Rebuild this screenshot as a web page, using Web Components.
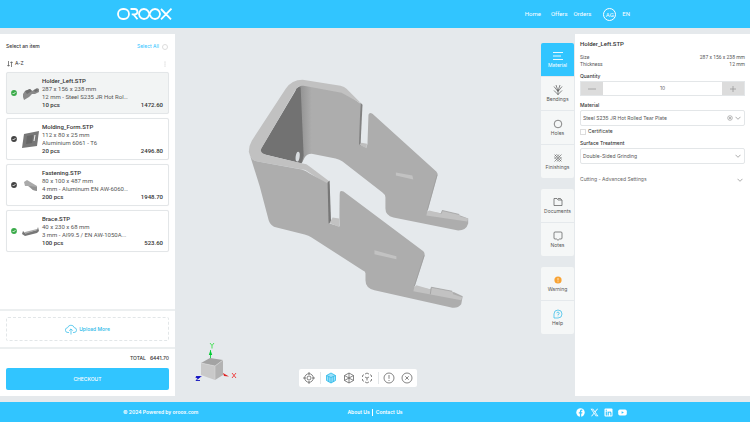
<!DOCTYPE html>
<html lang="en">
<head>
<meta charset="utf-8">
<meta name="viewport" content="width=device-width, initial-scale=1">
<title>OROOX</title>
<style>
:root{--brand:#31c5ff;--bg:#e5e9ec;--line:#e3e6e8;--ink:#333;--soft:#666;--main:Roboto,"Liberation Sans",sans-serif}
body{margin:0;font:5px/7px Inter,Roboto,sans-serif;color:var(--ink);background:var(--bg)}
</style>
</head>
<body>
<ox-app></ox-app>
<script>
const base = `<style>
*{box-sizing:border-box}
button,input,select{font:inherit;color:inherit;margin:0;padding:0;border:0;background:none;border-radius:0;outline:0}
button{cursor:pointer}
a{color:inherit;text-decoration:none}
svg{display:block;flex:none;fill:none;stroke:currentColor}
h2,p{margin:0;font:inherit}
</style>`;
const define = (name, html, setup) => customElements.define(name, class extends HTMLElement {
  constructor() {
    super();
    const t = document.createElement('template');
    t.innerHTML = base + (typeof html === 'function' ? html(this) : html);
    this.attachShadow({mode: 'open'}).append(t.content.cloneNode(true));
    if (setup) setup(this, this.shadowRoot);
  }
});

const chevron = '<svg width="6" height="6" viewBox="0 0 6 6" stroke-width=".7" aria-hidden="true"><path d="M.5 1.800l2.500 2.500 2.500-2.500"/></svg>';

define('ox-header', `<style>
:host{display:flex;align-items:center;justify-content:space-between;height:28px;padding:0 16% 0 15.6%;background:var(--brand);color:#fff;font:6px/8px var(--main)}
nav{display:flex;align-items:center}
nav a{margin-right:10px}
nav a:nth-child(2){margin-right:6px}
nav a:nth-child(3){margin-right:12px}
.user{width:13px;height:13px;border:1px solid #fff;border-radius:50%;line-height:11px;text-align:center;margin-right:6px}
.home svg{stroke-linejoin:round}
</style>
<a class="home" href="#" aria-label="OROOX home"><svg width="56" height="14" viewBox="0 0 56 14" stroke-width="1.8"><rect x="1" y="2" width="11" height="10" rx="5"/><path d="M13.5 2h4.2a2.7 2.7 0 0 1 0 5.4h-3M16.5 7.4l4 4.9M27 12a5 5 0 1 1 4.2-7.700l2.600 5.400A5 5 0 1 0 38 2a5 5 0 0 0-4.200 2.300l-2.600 5.400A5 5 0 0 1 27 12M44 2l10 10.300M54.500 1.700L44 12.300"/></svg></a>
<nav aria-label="Main"><a href="#">Home</a><a href="#">Offers</a><a href="#">Orders</a><button class="user" type="button">AG</button><button type="button">EN</button></nav>`);

const thumbs = {
  holder: '<path fill="#8a8a8a" d="M2 9l2-3 5-2 2 2 5-3 2 1 0 3-4 2-3 0-3 3-5 3-1-3z"/><path fill="#6e6e6e" d="M4 6l5-2 2 2-5 3zM13 5l3-1 1 2-3 1z"/>',
  molding: '<path fill="#777" d="M3 3l15-3-2 15-15 2z"/><path fill="#666" d="M6 5l6-1-1 8-6 1z"/><path fill="#eee" d="M13.500 4l1 0-1 6-1 0z"/>',
  fastening: '<path fill="#aaa" d="M3 5l3-2 10 6v5l-4-1-5-4-3 0z"/><path fill="#929292" d="M8 9l8 1v4l-4-1z"/>',
  brace: '<path fill="#777" d="M2 8l2 2 12-3 1-3 1 4-2 2-12 3-3-2z"/><path fill="#aaa" d="M4 9l12-3v1L4 11z"/>'
};
define('ox-part', el => `<style>
:host{display:grid;grid-template-columns:14px 21px minmax(0,1fr);align-items:center;padding:4px 5px 4px 0;border:1px solid var(--line);border-radius:2px;background:#fff;font:6px/8px var(--main);box-shadow:0 0 1px #0001}
:host([selected]){background:#f2f4f4}
.state{justify-self:center;color:${el.hasAttribute('ready') ? '#3bab4a' : '#444'}}
.part{stroke:none}
.title,.last{font-weight:500}
.dim{color:#555}
.mat{overflow:hidden;text-overflow:ellipsis;white-space:nowrap;max-width:86px}
.last{display:flex;justify-content:space-between}
</style>
<svg class="state" width="6" height="6" viewBox="0 0 6 6"><circle cx="3" cy="3" r="2.900" fill="currentColor" stroke="none"/><path d="M1.600 3l1 1 1.900-2" stroke="#fff" stroke-width=".8"/></svg>
<svg class="part" width="19" height="17" viewBox="0 0 19 17" aria-hidden="true">${thumbs[el.getAttribute('shape')]}</svg>
<div><p class="title"><slot name="title"></slot></p><p class="dim"><slot name="size"></slot></p><p class="dim mat"><slot name="material"></slot></p><p class="last"><span><slot name="qty"></slot></span><span><slot name="price"></slot></span></p></div>`);

const part = (attrs, t, s, m, q, p) => `<ox-part role="listitem" ${attrs}><span slot="title">${t}</span><span slot="size">${s}</span><span slot="material">${m}</span><span slot="qty">${q}</span><span slot="price">${p}</span></ox-part>`;
define('ox-items', `<style>
:host{display:flex;flex-direction:column;background:#fff;min-width:0}
.top{display:flex;justify-content:space-between;align-items:center;padding:9px 7px 0 6px}
.top label{display:flex;align-items:center;gap:3px;color:var(--brand)}
.top>span{font-weight:500}
input{appearance:none;width:6px;height:6px;border:1px solid #ddd;border-radius:50%}
.sort{display:flex;justify-content:space-between;padding:10px 9px 0 7px;margin-bottom:5px}
.sort button{display:flex;align-items:center;gap:2px;height:7px}
.list{flex:1;display:flex;flex-direction:column;gap:4px;padding:0 6px}
.upload{border-top:2px solid #eceff0;padding:6px}
.upload button{display:flex;width:100%;height:24px;align-items:center;justify-content:center;gap:2px;border:1px dashed #e2e6e8;border-radius:2px;color:#29b9e8;font-weight:500}
.pay{border-top:2px solid #eceff0;padding:6px}
.total{display:flex;justify-content:flex-end;gap:4px;margin-bottom:6px;font-weight:500}
.checkout{width:100%;height:22px;background:var(--brand);color:#fff;border-radius:2px;font-weight:500}
</style>
<div class="top"><span>Select an item</span><label>Select All <input type="checkbox"></label></div>
<div class="sort"><button type="button"><svg width="6" height="6" viewBox="0 0 6 6" stroke-width=".6" aria-hidden="true"><path d="M1.500 0v5M.3 4l1.200 1.300L2.700 4M4.500 6V1M3.300 2l1.200-1.300L5.700 2"/></svg>A-Z</button><button type="button" aria-label="More"><svg width="2" height="6" viewBox="0 0 2 6" style="fill:#bbb;stroke:none"><circle cx="1" cy="1" r=".5"/><circle cx="1" cy="3" r=".5"/><circle cx="1" cy="5" r=".5"/></svg></button></div>
<div class="list" role="list">
${part('shape="holder" ready selected', 'Holder_Left.STP', '287 x 156 x 238 mm', '12 mm - Steel S235 JR Hot Roll...', '10 pcs', '1472.60')}
${part('shape="molding"', 'Molding_Form.STP', '112 x 80 x 25 mm', 'Aluminium 6061 - T6', '20 pcs', '2496.80')}
${part('shape="fastening"', 'Fastening.STP', '80 x 100 x 487 mm', '4 mm - Aluminum EN AW-6060...', '200 pcs', '1948.70')}
${part('shape="brace" ready', 'Brace.STP', '40 x 230 x 68 mm', '3 mm - Al99.5 / EN AW-1050A...', '100 pcs', '523.60')}
</div>
<div class="upload"><button type="button"><svg width="12" height="11" viewBox="0 0 12 11" stroke-width=".7" aria-hidden="true"><path d="M4 8.500H3a2.400 2.400 0 0 1-.4-4.800A3.500 3.500 0 0 1 9.300 3.700 2.400 2.400 0 0 1 9 8.500H8M6 10.500V5M4.200 6.700L6 4.900l1.800 1.800"/></svg>Upload More</button></div>
<div class="pay"><div class="total"><span>TOTAL</span><span>6441.70</span></div><button class="checkout" type="button">CHECKOUT</button></div>`);

define('ox-scene', `<style>
:host{display:block;position:relative;min-height:0}
.model{width:100%;height:100%;stroke:none}
.axes{position:absolute;left:19px;bottom:-17px;stroke:none}
</style>
<svg class="model" viewBox="175 34 366 334" role="img" aria-label="Holder_Left.STP model">
<defs><linearGradient id="w" x1="296" x2="312" gradientUnits="userSpaceOnUse"><stop stop-color="#808080"/><stop offset=".35" stop-color="#959595"/><stop offset="1" stop-color="#adadad"/></linearGradient></defs>
<path fill="url(#w)" d="M296 88L302 84 343 90 361 103V144L367 147 368 143 369 114Q370 111 373 113L437 171Q439 173 438 175L428 211 461 215 469 218V223Q467 230 459 230L394 217Q386 215 386 208V197Q386 194 383 192L343 161Q340 159 336 158L312 153Q307 153 305 157L302 163Z"/>
<path fill="#727272" d="M260 150L297 88Q300 85 301 87L304 155 302 163 262 153Z"/>
<ellipse cx="298" cy="156" rx="2" ry="5" fill="#d8dcdf" transform="rotate(8 298 156)"/>
<path fill="#c1c1c1" fill-rule="evenodd" d="M249 151Q249 145 252 140L286 88Q292 79 303 79L341 85Q345 86 347 88L362 103 342 92 304 85Q299 84 296 89L262 147Q259 152 266 154L303 163Q307 163 310 166L330 181 329 185 308 171Q306 169 303 169L258 161Q251 160 249 151Z"/>
<path fill="#818181" d="M361 102L363 104 361 145 359.500 143.500Z"/>
<path fill="#bebebe" d="M360 144L362 142 367.500 143 367 147.500Z"/>
<path fill="#adadad" d="M250 154Q252 160 258 161L302 169Q306 170 310 173L330 184V223L340 226 339.500 194Q340 189 344 191L424 251Q426 253 425 256L415 287 455 292 463.500 296 462 304Q458 309 451 307L375 290Q366 288 366 280V273Q366 271 363 270L312 237Q309 235 305 234L277 227Q271 226 269 220L260 186Z"/>
<path fill="#777" d="M328 182L330 180 331.500 222 329 223Z"/>
<path fill="#e5e9ec" d="M331.500 181H340.500L339.500 218 332 217Z"/>
<path fill="#c2c2c2" d="M330 222.500L333 217 339.500 218V226.500ZM396.500 172L413 175 414 179 396.500 175ZM375 250L397 256V259L375 254ZM428 211L430 210 442 213 443 210 460 214 461 216 469 218 468 221 427 215ZM415 287L417 285 431 289 432 287 453 291 454 294 463 297 462 300 414 291Z"/>
<path stroke="#999" stroke-width=".7" fill="none" d="M442 213l1-3 17 4M431 294l1-7 21 4M425 255l-10 31M438 174l-10 36"/>
</svg>
<svg class="axes" width="46" height="46" viewBox="194 341 46 46" role="img" aria-label="X Y Z axes">
<path d="M210.500 360v-9" stroke="#0c3" stroke-width=".8"/><path fill="#0c3" d="M208.800 356l1.700-5 1.700 5z"/>
<path fill="#a3a3a3" d="M201 364l9-5 13 2-8 6z"/><path fill="#c9c9c9" d="M201 364l14 3v14l-14-5z"/><path fill="#b3b3b3" d="M223 361v15l-8 5v-14z"/>
<path fill="none" stroke="#d8d8d8" stroke-width=".6" d="M201 364l14 3 8-6M215 367v14"/>
<path fill="#d22" d="M223 374l6 3.500-5-.5z"/><path fill="#11c" d="M202 377l-7 1 3 2z"/>
<g fill="none" stroke-width=".9"><path stroke="#39e04a" d="M210 344l2 2.500 2-2.500M212 346.500v3"/><path stroke="#e33" d="M232 374l4 5M236 374l-4 5"/><path stroke="#11b" d="M196 377.500h4l-4 4h4"/></g>
</svg>`);

define('ox-view-tools', `<style>
:host{display:flex;align-items:center;justify-content:center;padding-bottom:9px}
div{display:flex;align-items:center;height:18px;padding:0 4px;gap:6px;background:#fff;border-radius:2px;color:#666}
button{display:flex;width:12px;height:12px;align-items:center;justify-content:center}
.on{color:#29b9e8}
hr{width:1px;height:12px;margin:0 -2px 0 -1px;border:0;background:var(--line)}
svg{stroke-width:.8}
</style>
<div role="toolbar" aria-label="View">
<button type="button" aria-label="Center"><svg width="12" height="12" viewBox="0 0 12 12"><circle cx="6" cy="6" r="4.300"/><circle cx="6" cy="6" r="2"/><path d="M6 0v3M6 9v3M0 6h3M9 6h3"/></svg></button><hr>
<button class="on" type="button" aria-label="Shaded"><svg width="12" height="12" viewBox="0 0 12 12"><path fill="#9be0fa" d="M1.500 3.500L6 1l4.500 2.500v5L6 11 1.500 8.500z"/><path d="M1.500 3.500L6 5.500l4.500-2M6 5.500V11M3.700 4.500V10M8.300 4.500V10"/></svg></button>
<button type="button" aria-label="Wireframe"><svg width="12" height="12" viewBox="0 0 12 12"><path d="M1.500 3.500L6 1l4.500 2.500v5L6 11 1.500 8.500zM1.500 3.500l9 5M10.500 3.500l-9 5M6 1v10"/></svg></button>
<button type="button" aria-label="Outline"><svg width="12" height="12" viewBox="0 0 12 12"><path d="M4 2.100L6 1l2 1.100M9 2.700l1.500.8V5M10.500 7v1.500L9 9.300M8 9.900L6 11 4 9.900M3 9.300l-1.500-.8V7M1.500 5V3.500L3 2.700M4 5l2 1 2-1M6 6v2.500"/></svg></button><hr>
<button type="button" aria-label="Info"><svg width="12" height="12" viewBox="0 0 12 12"><circle cx="6" cy="6" r="5"/><path d="M6 3v3.800M6 8v1"/></svg></button>
<button type="button" aria-label="Close"><svg width="12" height="12" viewBox="0 0 12 12"><circle cx="6" cy="6" r="5"/><path d="M4.300 4.300l3.400 3.400M7.700 4.300L4.300 7.700"/></svg></button>
</div>`);

const icons = {
  material: '<path stroke-width=".9" d="M1 2.500h10M1 6h8M1 9.500h10"/>',
  bendings: '<path d="M2 2.500l4 5 4-5M4 1l2 6 2-6M2 6.500l4 4 4-4M6 6v5"/>',
  holes: '<circle cx="6" cy="6" r="3.800"/>',
  finishings: '<path stroke-width=".6" d="M2.500 4.500l2-2M2.500 7l4.500-4.500M2.500 9.500l7-7M5 9.500L9.500 5M7.500 9.500l2-2"/><path stroke-width=".5" d="M2.500 2.500l7 7M5 2.500L9.500 7M2.500 5L7 9.500"/>',
  documents: '<path d="M2 9.500v-7h3l1 1.500h4v5.500zM6 2.500h2.500L9.500 4"/>',
  notes: '<path d="M3 2h6a1 1 0 0 1 1 1v5a1 1 0 0 1-1 1H7.500L6 10.300 4.500 9H3a1 1 0 0 1-1-1V3a1 1 0 0 1 1-1z"/>',
  warning: '<circle cx="6" cy="6" r="3.600" fill="#f8a334" stroke="none"/><path stroke="#fff" d="M6 4v2.500M6 7.300v.9"/>',
  help: '<g stroke="#29b9e8"><path d="M2 10V6a4 4 0 1 1 4 4z"/><path d="M4.800 5.200a1.200 1.200 0 1 1 1.200 1.300v.6M6 7.700v.6"/></g>'
};
define('ox-tab', el => `<style>
:host{display:block}
button{display:flex;flex-direction:column;align-items:center;justify-content:center;width:100%;height:33px;background:#f5f7f7;color:#555}
:host([active]) button{background:var(--brand);color:#fff}
svg{stroke-width:.7}
</style><button type="button"><svg width="12" height="12" viewBox="0 0 12 12" aria-hidden="true">${icons[el.getAttribute('icon')]}</svg><span><slot></slot></span></button>`);
define('ox-tabs', `<style>
:host{display:flex;flex-direction:column;gap:11px;padding-top:9px}
div{display:flex;flex-direction:column;gap:1px;border-radius:2px;overflow:hidden}
</style>
<div><ox-tab icon="material" active>Material</ox-tab><ox-tab icon="bendings">Bendings</ox-tab><ox-tab icon="holes">Holes</ox-tab><ox-tab icon="finishings">Finishings</ox-tab></div>
<div><ox-tab icon="documents">Documents</ox-tab><ox-tab icon="notes">Notes</ox-tab></div>
<div><ox-tab icon="warning">Warning</ox-tab><ox-tab icon="help">Help</ox-tab></div>`);

define('ox-settings', `<style>
:host{display:block;background:#fff;padding:6px 5px;min-width:0}
h2{font:500 6px/8px var(--main);margin-bottom:6px}
dl{margin:0 0 5px;color:#555;font-family:var(--main)}
dl div{display:flex;justify-content:space-between}
dd{margin:0}
.name{display:block;font-weight:500;margin-bottom:1px}
.step{display:flex;height:15px;border:1px solid var(--line);margin-bottom:6px}
.step button{display:flex;align-items:center;justify-content:center;width:22px;background:#dcdcdc;color:#999}
.step input{flex:1;min-width:0;text-align:center;color:#666}
.pick{display:flex;align-items:center;gap:2px;height:16px;border:1px solid var(--line);border-radius:2px;padding:0 3px 0 2px;color:#555}
.pick select{appearance:none;flex:1;min-width:0;height:100%}
.pick button{color:#aaa}
.pick svg,.more svg{color:#888}
.check{display:flex;align-items:center;gap:2px;margin:2px 0 5px}
.check input{appearance:none;width:6px;height:6px;border:1px solid #ddd}
.more{display:flex;align-items:center;justify-content:space-between;width:100%;margin-top:12px;padding-right:2px;color:var(--soft)}
</style>
<h2>Holder_Left.STP</h2>
<dl><div><dt>Size</dt><dd>287 x 156 x 238 mm</dd></div><div><dt>Thickness</dt><dd>12 mm</dd></div></dl>
<label class="name" for="q">Quantity</label>
<div class="step"><button type="button" aria-label="Less"><svg width="10" height="8" viewBox="0 0 10 8" stroke-width=".8"><path d="M1 4h8"/></svg></button><input id="q" type="text" inputmode="numeric" value="10"><button type="button" aria-label="More"><svg width="8" height="8" viewBox="0 0 8 8" stroke-width=".8"><path d="M1 4h6M4 1v6"/></svg></button></div>
<label class="name" for="m">Material</label>
<div class="pick"><select id="m"><option>Steel S235 JR Hot Rolled Tear Plate</option></select><button type="button" aria-label="Clear"><svg width="6" height="6" viewBox="0 0 6 6" stroke-width=".6"><circle cx="3" cy="3" r="2.300"/><path d="M2 2l2 2M4 2L2 4"/></svg></button>${chevron}</div>
<label class="check"><input type="checkbox">Certificate</label>
<label class="name" for="s">Surface Treatment</label>
<div class="pick"><select id="s"><option>Double-Sided Grinding</option></select>${chevron}</div>
<button class="more" type="button" aria-expanded="false">Cutting - Advanced Settings${chevron}</button>`);

define('ox-footer', `<style>
:host{display:grid;grid-template-columns:1fr auto 1fr;align-items:center;height:20px;padding:0 16.4%;background:var(--brand);color:#fff;font-weight:600}
nav{display:flex;gap:2px}
nav a+a{border-left:1px solid #fff;padding-left:3px}
.social{display:flex;justify-content:flex-end;gap:5px}
.social svg{stroke:none;fill:#fff}
</style>
<span>© 2024 Powered by oroox.com</span>
<nav aria-label="Footer"><a href="#">About Us</a><a href="#">Contact Us</a></nav>
<div class="social">
<a href="#" aria-label="Facebook"><svg width="9" height="9" viewBox="0 0 9 9"><circle cx="4.500" cy="4.500" r="4.200"/><path fill="#31c5ff" d="M3.900 9V5.500H2.800V4.200h1.100V3.300c0-1.200.7-1.700 1.700-1.700l.8.1v1.100h-.6c-.5 0-.6.2-.6.6v.8h1.200l-.2 1.300h-1V9z"/></svg></a>
<a href="#" aria-label="X"><svg width="9" height="9" viewBox="0 0 9 9"><path d="M.5.800h2.600l5.400 7.400H5.900z"/><path fill="#31c5ff" d="M1.900 1.500h.8l4.400 6h-.8z"/><path d="M7.200.800h1L5.200 4.200l-.5-.6zM1 8.200h1L4.300 5.600l-.5-.7z"/></svg></a>
<a href="#" aria-label="LinkedIn"><svg width="9" height="9" viewBox="0 0 9 9"><rect x=".5" y=".5" width="8" height="8" rx="1"/><path fill="#31c5ff" d="M1.700 3.500h1.200v3.900H1.700zM1.700 1.700h1.200v1.100H1.700zM3.600 3.500h1.100V4c.8-1 2.800-.7 2.800 1.100v2.300H6.300V5.300c0-1.100-1.500-1-1.500 0v2.100H3.600z"/></svg></a>
<a href="#" aria-label="YouTube"><svg width="9" height="9" viewBox="0 0 9 9"><rect x=".2" y="1.500" width="8.600" height="6" rx="1.700"/><path fill="#31c5ff" d="M3.600 3.200v2.600l2.300-1.300z"/></svg></a>
</div>`);

define('ox-app', `<style>
:host{display:flex;flex-direction:column;min-height:100vh}
main{flex:1;display:grid;grid-template-columns:7fr 16fr 7fr;padding:6px 0;min-height:0}
.stage{display:flex;gap:1px;padding-right:1px;min-width:0}
.canvas{flex:1;display:flex;flex-direction:column;min-width:0}
ox-scene{flex:1}
ox-tabs{flex:0 0 33px}
</style>
<ox-header role="banner"></ox-header>
<main><ox-items></ox-items><div class="stage"><div class="canvas"><ox-scene></ox-scene><ox-view-tools></ox-view-tools></div><ox-tabs></ox-tabs></div><ox-settings></ox-settings></main>
<ox-footer role="contentinfo"></ox-footer>`);
</script>
</body>
</html>
